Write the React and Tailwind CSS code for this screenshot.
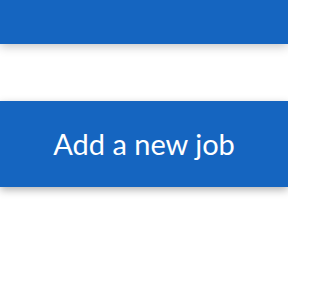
export default function App() {
  return (
    <div className="w-[288px] h-[288px] bg-white overflow-hidden" style={{ fontFamily: "Lato, 'Noto Sans', sans-serif" }}>
      {/* top bar */}
      <div className="h-[44px] w-full bg-[#1565c0] shadow-[0_2px_10px_rgba(0,0,0,0.25)]" />

      <div className="mt-[57px]">
        <button className="w-full h-[86px] bg-[#1565c0] text-white text-[29px] flex items-center justify-center shadow-[0_3px_8px_rgba(0,0,0,0.3)]">
          Add a new job
        </button>
      </div>
    </div>
  );
}
